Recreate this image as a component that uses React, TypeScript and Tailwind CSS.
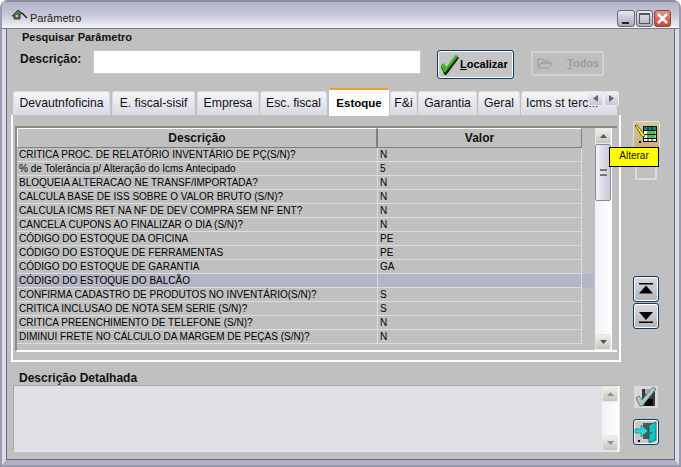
const tabs = [
  { label: "Devautnfoficina", w: "w-[97px]" },
  { label: "E. fiscal-sisif", w: "ml-[2px] w-[83px]" },
  { label: "Empresa", w: "ml-[2px] w-[62px]" },
  { label: "Esc. fiscal", w: "ml-[1px] w-[67px]" },
  { label: "Estoque", w: "ml-[2px] w-[60px]", active: true },
  { label: "F&i", w: "ml-[1px] w-[27px]" },
  { label: "Garantia", w: "ml-[1px] w-[59px]" },
  { label: "Geral", w: "ml-[1px] w-[42px]" },
  { label: "Icms st terc...", w: "ml-[1px] w-[96px] justify-start pl-[4px]" },
];

const rows = [
  ["CRITICA PROC. DE RELATÓRIO INVENTÁRIO DE PÇ(S/N)?", "N"],
  ["% de Tolerância p/ Alteração do Icms Antecipado", "5"],
  ["BLOQUEIA ALTERACAO NE TRANSF/IMPORTADA?", "N"],
  ["CALCULA BASE DE ISS SOBRE O VALOR BRUTO (S/N)?", "N"],
  ["CALCULA ICMS RET NA NF DE DEV COMPRA SEM NF ENT?", "N"],
  ["CANCELA CUPONS AO FINALIZAR O DIA (S/N)?", "N"],
  ["CÓDIGO DO ESTOQUE DA OFICINA", "PE"],
  ["CÓDIGO DO ESTOQUE DE FERRAMENTAS", "PE"],
  ["CÓDIGO DO ESTOQUE DE GARANTIA", "GA"],
  ["CÓDIGO DO ESTOQUE DO BALCÃO", ""],
  ["CONFIRMA CADASTRO DE PRODUTOS NO INVENTÁRIO(S/N)?", "S"],
  ["CRITICA INCLUSAO DE NOTA SEM SERIE (S/N)?", "S"],
  ["CRITICA PREENCHIMENTO DE TELEFONE (S/N)?", "N"],
  ["DIMINUI FRETE NO CÁLCULO DA MARGEM DE PEÇAS (S/N)?", "N"],
];

function Arrow({ dir, light }: { dir: "up" | "down"; light?: boolean }) {
  return (
    <svg width="7" height="4" viewBox="0 0 7 4">
      <path d={dir === "up" ? "M3.5 0 7 4H0z" : "M0 0h7L3.500 4z"} fill={light ? "#8f8f8f" : "#555"} />
    </svg>
  );
}

function ScrollButton({ dir, light }: { dir: "up" | "down"; light?: boolean }) {
  return (
    <div className="flex h-[16px] w-[16px] shrink-0 items-center justify-center rounded-[2px] border border-[#e8e8e0] bg-gradient-to-b from-[#f0f0ea] to-[#c4c4c4]">
      <Arrow dir={dir} light={light} />
    </div>
  );
}

function WindowButtons() {
  return (
    <div className="flex gap-[1px]">
      <div className="flex h-[17px] w-[18px] items-end rounded-[3px] border border-[#66667c] bg-gradient-to-b from-[#e8e8f0] to-[#a8a8b8] pb-[2px] pl-[4px]">
        <div className="h-[2px] w-[7px] bg-[#222]" />
      </div>
      <div className="flex h-[17px] w-[17px] items-center justify-center rounded-[3px] border border-[#66667c] bg-gradient-to-b from-[#e8e8f0] to-[#b0b0c0]">
        <div className="h-[11px] w-[11px] border border-t-[2px] border-[#555568]" />
      </div>
      <div className="flex h-[17px] w-[17px] items-center justify-center rounded-[3px] border border-[#8a4040] bg-gradient-to-b from-[#e89080] to-[#c44a34]">
        <svg width="13" height="13" viewBox="0 0 13 13">
          <path d="M2 2l9 9M11 2l-9 9" stroke="#fff" strokeWidth="2.500" />
        </svg>
      </div>
    </div>
  );
}

function Check() {
  return (
    <svg width="20" height="22" viewBox="0 0 22 22" preserveAspectRatio="none">
      <path d="M1 13l3-2 3 4L18 2l3 2L7 21H5z" fill="#1c2a1c" />
      <path d="M1 11l3-2 3 4L17 1l3 1L6 18H4z" fill="#3cb81c" />
    </svg>
  );
}

function EditIcon() {
  return (
    <svg width="24" height="22" viewBox="0 0 24 22">
      <rect x="9.500" y="2.500" width="13" height="15" fill="#fff" stroke="#111" />
      <rect x="10" y="3" width="12" height="3" fill="#0a8a8a" />
      <path d="M10 6.500h12M10 10.500h12M10 14.500h12M14 3v14M18 3v14" stroke="#111" />
      <rect x="14.500" y="7" width="3" height="3" fill="#2fd03a" />
      <rect x="14.500" y="11" width="3" height="3" fill="#2fd03a" />
      <rect x="18.500" y="7" width="3" height="3" fill="#2fd03a" />
      <rect x="18.500" y="11" width="3" height="3" fill="#2fd03a" />
      <path d="M1 1.500 3 1l8 10-1 2-2-.5z" fill="#f5e61a" stroke="#333" strokeWidth="0.700" />
      <rect x="5" y="17" width="2" height="2" fill="#111" />
    </svg>
  );
}

function SaveIcon() {
  return (
    <svg width="22" height="20" viewBox="0 0 22 20">
      <path d="M7 2h13v17H7z" fill="#3a3a3a" />
      <path d="M10 2h7v5h-7z" fill="#a8a8a8" />
      <path d="M10 12h8v7h-8z" fill="#0c0c0c" />
      <path d="M1 11l3-2 3 4L18 0l3 2L7 19H5z" fill="#b4c6c6" stroke="#5d8686" />
    </svg>
  );
}

function ExitIcon() {
  return (
    <svg width="24" height="22" viewBox="0 0 24 22">
      <path d="M9 2h11v16H9z" fill="#555" />
      <path d="M15 4l7-3v18l-7 3z" fill="#14c4c4" stroke="#085050" strokeWidth="0.600" />
      <circle cx="17" cy="12" r="0.800" fill="#044" />
      <path d="M1 8h6V4l7 6-7 6v-4H1z" fill="#2ad8d8" stroke="#0a7878" strokeWidth="0.600" />
      <rect x="4" y="19" width="2" height="2" fill="#111" />
    </svg>
  );
}

function MoveIcon({ dir }: { dir: "top" | "bottom" }) {
  return (
    <div className="flex h-[26px] w-[26px] items-center justify-center rounded-[3px] border border-[#0e3a5e] bg-gradient-to-b from-[#dcdce0] to-[#b4b4b8] shadow-[inset_0_0_0_1px_#ffffff]">
      <svg width="14" height="13" viewBox="0 0 14 13">
        {dir === "top" ? (
          <path d="M0 0h14v1.500H0zM7 2.500l7 8H0z" fill="#000" />
        ) : (
          <path d="M0 2h14L7 10zM0 11.500h14V13H0z" fill="#000" />
        )}
      </svg>
    </div>
  );
}

export default function App() {
  return (
    <div className="flex h-[467px] w-[681px] flex-col overflow-hidden rounded-t-[8px] border-x-2 border-b-2 border-[#9a9ab0] bg-[#c0c0c0] font-['Liberation_Sans',Arial,sans-serif] text-black">
      <div className="-mx-[2px] flex h-[29px] shrink-0 items-center border-t-2 border-b border-t-[#8a8aa0] border-b-[#77778c] bg-gradient-to-b from-[#b4b4c8] via-[#c8c8da] to-[#f4f4f8] pl-[11px] pr-[10px]">
        <svg width="17" height="13" viewBox="0 0 17 13" className="mt-[1px]">
          <path d="M1 7l6-6 4 3-1 1H9v5H3V7z" fill="#4c7a60" stroke="#222" strokeWidth="0.800" />
          <rect x="5" y="6" width="2" height="2" fill="#e8c040" />
          <path d="M11 4l5 5" stroke="#222" strokeWidth="1.500" />
        </svg>
        <span className="ml-[2px] mt-[7px] text-[11px] text-[#222]">Parâmetro</span>
        <div className="ml-auto mt-[7px]">
          <WindowButtons />
        </div>
      </div>

      <div className="flex min-h-0 flex-1 border-x-[4px] border-b-[5px] border-x-[#dcdce8] border-b-[#b0b0c6]">
        <div className="flex min-h-0 flex-1 border-x border-b border-[#66667c]">
          <div className="flex min-w-0 flex-1 flex-col">
            <section className="h-[62px] shrink-0 pl-[6px] pr-[9px]">
              <div className="h-[59px] rounded-[4px] border border-t-0 border-[#bcbcbc]">
                <div className="pl-[8px] pt-[1px] text-[11px] font-bold leading-[14px] text-[#111]">Pesquisar Parâmetro</div>
                <div className="mt-[6px] flex items-start">
                  <span className="mt-[2px] w-[79px] pl-[6px] text-[12px] font-bold leading-[15px] text-[#111]">Descrição:</span>
                  <div className="h-[24px] w-[328px] border border-[#c8c8c8] bg-white" />
                  <button className="ml-[16px] flex h-[29px] w-[77px] items-center rounded-[3px] border border-[#0e3a5e] bg-[#c4c4c4] pl-[2px] text-[11px] font-bold shadow-[inset_0_0_0_1px_#ffffff]">
                    <Check />
                    <span><span className="underline">L</span>ocalizar</span>
                  </button>
                  <button className="ml-[17px] mt-[1px] flex h-[25px] w-[73px] items-center rounded-[2px] border-2 border-[#d2d2d2] bg-[#bebebe] pl-[4px] text-[11px] font-bold text-[#9c9c9c]">
                    <svg width="16" height="11" viewBox="0 0 16 11">
                      <path d="M1 10V1h5l1 2h5v2H4l-3 5h11l3-5H4" fill="none" stroke="#9c9c9c" />
                    </svg>
                    <span className="ml-[14px]"><span className="underline">T</span>odos</span>
                  </button>
                </div>
              </div>
            </section>

            <section className="relative shrink-0 pl-[4px]">
              <div className="flex h-[24px] items-end pl-[2px]">
                {tabs.map((t) =>
                  t.active ? (
                    <div
                      key={t.label}
                      className={`${t.w} z-10 -mb-[1px] flex h-[28px] shrink-0 items-center justify-center rounded-t-[2px] border-t-2 border-[#f0a020] bg-white pt-[1px] text-[11.500px] font-bold`}
                    >
                      {t.label}
                    </div>
                  ) : (
                    <div
                      key={t.label}
                      className={`${t.w} flex h-[24px] shrink-0 items-center justify-center overflow-hidden whitespace-nowrap rounded-t-[3px] border border-b-0 border-[#dcdce4] bg-gradient-to-b from-[#f4f4f8] to-[#d9d9e6] text-[12.200px] text-[#111]`}
                    >
                      {t.label}
                    </div>
                  ),
                )}
              </div>
              <div className="absolute left-[581px] top-[0px] z-20 flex gap-[1px]">
                <div className="flex h-[15px] w-[15px] items-center justify-center rounded-[2px] border border-[#e8e8ee] bg-gradient-to-b from-[#f0f0f6] to-[#c8c8d4]">
                  <svg width="5" height="7" viewBox="0 0 5 7"><path d="M0 3.500 5 0v7z" fill="#666" /></svg>
                </div>
                <div className="flex h-[15px] w-[15px] items-center justify-center rounded-[2px] border border-[#e8e8ee] bg-gradient-to-b from-[#f0f0f6] to-[#c8c8d4]">
                  <svg width="5" height="7" viewBox="0 0 5 7"><path d="M5 3.500 0 0v7z" fill="#666" /></svg>
                </div>
              </div>

              <div className="h-[247px] w-[610px] border-2 border-t-0 border-white bg-[#c0c0c0] pl-[2px] pr-[2px] pt-[11px]">
                <div className="flex h-[226px] border-2 border-b-2 border-r-0 border-b-white border-l-[#8a8a8a] border-t-[#8a8a8a]">
                  <div className="w-[565px] shrink-0 bg-[#c0c0c0]">
                    <div className="flex h-[20px] text-[12px] font-bold leading-[18px] text-[#111]">
                      <div className="w-[361px] border-b border-l border-r-2 border-t border-[#ffffff] border-r-[#808080] border-b-[#808080] text-center">Descrição</div>
                      <div className="flex-1 border-b border-r border-t border-white border-b-[#808080] border-r-[#808080] text-center">Valor</div>
                    </div>
                    {rows.map(([d, v], i) => (
                      <div
                        key={d}
                        className={`flex h-[14px] text-[10px] leading-[13px] ${i === 9 ? "w-[577px] bg-[#b5b5c8]" : ""}`}
                      >
                        <div className="w-[361px] truncate border-b border-r border-[#dcdcdc] pl-[2px]">{d}</div>
                        <div className="w-[204px] border-b border-r border-[#dcdcdc] pl-[2px]">{v}</div>
                      </div>
                    ))}
                  </div>
                  <div className="ml-[13px] flex w-[17px] shrink-0 flex-col bg-gradient-to-r from-[#f0f0f8] to-white">
                    <ScrollButton dir="up" />
                    <div className="flex h-[57px] w-[16px] items-center justify-center rounded-[2px] border border-[#8a8a9a] bg-gradient-to-r from-[#f2f2f8] to-[#c8c8d8]">
                      <div className="h-[7px] w-[7px] border-y-2 border-[#777]" />
                    </div>
                    <div className="flex-1" />
                    <ScrollButton dir="down" />
                  </div>
                </div>
              </div>
            </section>

            <section className="shrink-0 pl-[6px] pr-[8px] pt-[9px]">
              <div className="pl-[6px] text-[12px] font-bold leading-[14px] text-[#111]">Descrição Detalhada</div>
              <div className="flex h-[67px] w-[607px] border border-[#a8a8a8] border-b-[#e8e8e8] border-r-[#e8e8e8] bg-[#e0e0e4]">
                <div className="flex-1" />
                <div className="flex w-[17px] flex-col justify-between bg-gradient-to-r from-[#f0f0f8] to-white">
                  <ScrollButton dir="up" light />
                  <ScrollButton dir="down" light />
                </div>
              </div>
            </section>
          </div>

          <aside className="relative mb-[6px] mr-[9px] ml-[-2px] mt-[84px] flex w-[38px] shrink-0 flex-col items-center rounded-[4px] border border-[#bcbcbc] pt-[7px]">
            <div className="flex h-[27px] w-[27px] shrink-0 items-center justify-center rounded-[2px] border border-[#e0e0d8] bg-gradient-to-b from-[#d8c8a0] to-[#c8b080]">
              <EditIcon />
            </div>
            <div className="mt-[6px] h-[26px] w-[22px] shrink-0 rounded-[1px] border-2 border-[#dcdcdc] bg-[#c0c0c0]" />
            <div className="mt-[96px] flex shrink-0 flex-col gap-[1px]">
              <MoveIcon dir="top" />
              <MoveIcon dir="bottom" />
            </div>
            <div className="mb-[7px] mt-auto flex shrink-0 flex-col items-center gap-[11px]">
              <div className="flex h-[22px] w-[24px] items-center justify-center bg-[#d8d8d8]">
                <SaveIcon />
              </div>
              <div className="flex h-[26px] w-[26px] items-center justify-center rounded-[3px] border border-[#0e3a5e] bg-[#c8c8c8] shadow-[inset_0_0_0_1px_#ffffff]">
                <ExitIcon />
              </div>
            </div>
            <div className="absolute left-[-19px] top-[33px] flex h-[20px] w-[50px] items-start justify-center border border-black bg-[#ffff00] pt-[1px] text-[10px] leading-[13px] text-[#111]">
              Alterar
            </div>
          </aside>
        </div>
      </div>
    </div>
  );
}
